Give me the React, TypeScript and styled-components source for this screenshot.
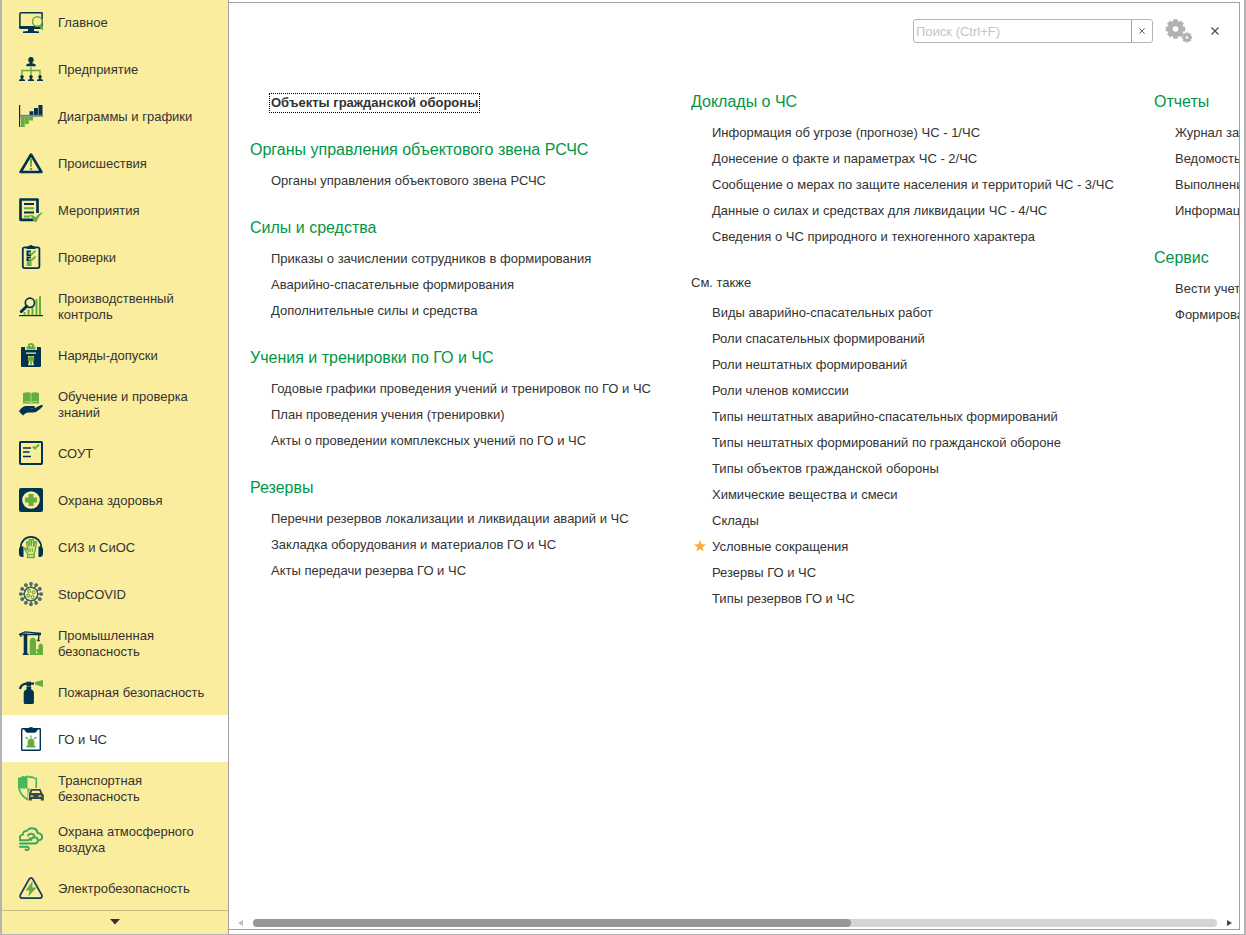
import React, { useRef, useState } from "react";
import styled, { createGlobalStyle, css } from "styled-components";

const NAVY = "#00334f";
const LEAF = "#65ad3f";
const EMERALD = "#37a85a";
const PAPER = "#fbed9e";

const GlobalStyle = createGlobalStyle`
  *, *::before, *::after { box-sizing: border-box; }
  html, body, #root { height: 100%; margin: 0; }
  body {
    background: #fff;
    color: #333;
    font: 13px/16px "Liberation Sans", Arial, sans-serif;
  }
  button { font: inherit; color: inherit; }
`;

const Window = styled.div`
  display: flex;
  height: 100vh;
  overflow: hidden;
  border: solid #b4b4b4;
  border-width: 0 2px 1px 2px;
`;

const Sidebar = styled.nav`
  display: flex;
  flex-direction: column;
  flex: none;
  width: 227px;
  background: ${PAPER};
  border-right: 1px solid #a0a0a0;
`;

const SectionList = styled.ul`
  flex: 1;
  min-height: 0;
  margin: -2px 0 0;
  padding: 0;
  list-style: none;
  overflow: hidden;
`;

const SectionButton = styled.button<{ $active?: boolean }>`
  display: flex;
  align-items: center;
  gap: 14px;
  width: 100%;
  min-height: 47px;
  padding: 9px 16px 8px;
  border: 0;
  text-align: left;
  background: ${(p) => (p.$active ? "#fff" : "transparent")};
  cursor: pointer;
`;

const SectionIcon = styled.svg`
  flex: none;
  width: 26px;
  height: 26px;
`;

const SectionLabel = styled.span`
  max-width: 150px;
  padding-top: 2px;
`;

const MoreButton = styled.button`
  display: flex;
  align-items: center;
  justify-content: center;
  flex: none;
  height: 24px;
  padding: 0 0 2px;
  border: 0;
  border-top: 1px solid #c9bd7e;
  background: none;
  cursor: pointer;
`;

const Panel = styled.main`
  display: flex;
  flex-direction: column;
  flex: 1;
  min-width: 0;
  margin: 2px 4px 4px 0;
  border: solid #a0a0a0;
  border-width: 1px 1px 1px 0;
`;

const Toolbar = styled.header`
  display: flex;
  align-items: center;
  justify-content: flex-end;
  flex: none;
  padding: 16px 20px 0 0;
`;

const SearchBox = styled.div`
  display: flex;
  width: 240px;
  height: 24px;
  border: 1px solid #b4b4b4;
  border-radius: 3px;
  overflow: hidden;
`;

const SearchInput = styled.input`
  flex: 1;
  min-width: 0;
  padding: 2px 2px 0;
  border: 0;
  outline: 0;
  background: none;
  font: inherit;
  color: #333;
  &::placeholder { color: #c4c4c4; opacity: 1; }
`;

const IconButton = styled.button<{ $divided?: boolean }>`
  display: flex;
  align-items: center;
  justify-content: center;
  padding: 0;
  border: 0;
  background: none;
  cursor: pointer;
  ${(p) =>
    p.$divided &&
    css`
      width: 21px;
      border-left: 1px solid #a0a0a0;
    `}
`;

const ToolbarActions = styled.div`
  display: flex;
  align-items: center;
  gap: 18px;
  margin-left: 12px;
`;

const Viewport = styled.div`
  flex: 1;
  min-height: 0;
  padding: 47px 0 0 21px;
  overflow: hidden;
`;

const Columns = styled.div`
  display: flex;
  gap: 42px;
  width: max-content;
`;

const Column = styled.div<{ $width: number }>`
  display: flex;
  flex-direction: column;
  gap: 22px;
  width: ${(p) => p.$width}px;
`;

const Heading = styled.h2<{ $plain?: boolean }>`
  margin: 0 0 6px;
  font-weight: 400;
  font-size: ${(p) => (p.$plain ? 13 : 16)}px;
  line-height: ${(p) => (p.$plain ? 22 : 24)}px;
  color: ${(p) => (p.$plain ? "#333" : "#009646")};
`;

const CommandList = styled.ul`
  margin: 0;
  padding: 0 0 0 21px;
  list-style: none;
`;

const CommandRow = styled.li`
  position: relative;
  line-height: 26px;
  white-space: nowrap;
`;

const Command = styled.a<{ $focused?: boolean }>`
  color: #333;
  text-decoration: none;
  ${(p) =>
    p.$focused &&
    css`
      display: inline-block;
      margin: 3px 0 3px -2px;
      padding: 1px;
      border: 1px dotted #000;
      font-weight: 700;
      line-height: 16px;
    `}
`;

const Star = styled.svg`
  position: absolute;
  left: -18px;
  top: 6px;
`;

const ScrollBar = styled.div`
  display: flex;
  align-items: center;
  flex: none;
  gap: 9px;
  height: 12px;
  padding: 0 7px 0 9px;
`;

const Track = styled.div`
  flex: 1;
  height: 8px;
  border-radius: 4px;
  background: #d4d4d4;
`;

const Thumb = styled.div`
  width: 62%;
  height: 8px;
  border-radius: 4px;
  background: #979797;
`;

const person = (x: number, y: number, s: number) => (
  <g transform={`translate(${x} ${y}) scale(${s})`} fill={NAVY}>
    <ellipse cx="0" cy="2.8" rx="2.7" ry="2.9" />
    <path d="M-1.300 4h2.600v2.200l2.700.8q.8.5.8 2.300h-9.600q0-1.800.8-2.300l2.700-.8z" />
  </g>
);

const icons: Record<string, React.ReactNode> = {
  monitor: (
    <>
      <path d="M23 3V3.8Q23 2.7 21.500 2.700H2.200Q.9 2.700.9 4v13.500h22.200V3z" fill="none" stroke={NAVY} strokeWidth="1.500" />
      <path d="M.3 16h19.500l2.200 3H1.500Q.3 19 .3 17.500zM9 19h6v2l5 .6V23H4v-1.400L9 21z" fill={NAVY} />
      <circle cx="18.300" cy="11.500" r="4.800" fill={PAPER} stroke={LEAF} strokeWidth="1.500" />
      <path d="M20 16l4 5V15.500z" fill={LEAF} />
    </>
  ),
  company: (
    <>
      {person(12, 0, 1)}
      <path d="M12 10v8.500M3 18v-4.500h18V18" fill="none" stroke={LEAF} strokeWidth="1.400" />
      {person(3, 18, 0.65)}
      {person(12, 18, 0.65)}
      {person(21, 18, 0.65)}
    </>
  ),
  bars: (
    <>
      <path d="M0 1h1.200v22H0z" fill={NAVY} />
      <path d="M2 13h3.800v10H2zM6 13h3.800v7H6zM10 13h4v3.500h-4z" fill={LEAF} />
      <path d="M10.500 7.300h3.900V11h-3.900zM15 4h3.900v7H15zM19.400 1H23.500v10h-4.100z" fill={NAVY} />
      <path d="M1 10.800h23v2H1z" fill="#738780" />
    </>
  ),
  warning: (
    <>
      <path d="M12 3.500L22.400 21H1.600z" fill="none" stroke={NAVY} strokeWidth="2.600" strokeLinejoin="round" />
      <path d="M10.900 7.500h2.200l-.3 8.500h-1.600zM10.900 17h2.200v2h-2.200z" fill={LEAF} />
    </>
  ),
  events: (
    <>
      <path d="M18.500 15V1.500H1.500v20.300h13" fill="none" stroke={NAVY} strokeWidth="2.700" strokeLinejoin="round" />
      <path d="M5 5h10v2H5zM5 13.500h10v2H5z" fill={NAVY} />
      <path d="M5 9.300h10v2H5zM5 17.500h6v2H5z" fill={LEAF} />
      <path d="M11 17l3 .3 2.700 2.300Q19.500 15 23.800 14q-3.600 4-6.500 10h-1.600z" fill={LEAF} />
    </>
  ),
  checks: (
    <>
      <rect x="3.800" y="2.300" width="16.600" height="20.800" rx="1.800" fill="none" stroke={NAVY} strokeWidth="1.800" />
      <path d="M7.500 3Q8 1 10 1q2-2 4 0 2 0 2.500 2v1h-9z" fill={NAVY} />
      <path d="M7.500 5.500h4.500v1.700H9.700v2H12V11H7.500zM7.500 11.500h4.500v1.700H9.700v2H12v1H7.500z" fill={NAVY} />
      <path d="M7.800 16.500h4.700V21H7.800z" fill={LEAF} />
      <path d="M10.500 7.500l2 2 4-3.800M10.500 13.300l2 2 4-3.800" fill="none" stroke={LEAF} strokeWidth="1.800" />
    </>
  ),
  control: (
    <>
      <path d="M20 2.200h2V21h-2zM16.500 5h2v16h-2zM12.500 13.500h2V21h-2zM8.500 15.500h2V21h-2zM4.500 18h2v3h-2z" fill={LEAF} />
      <path d="M0 21h24v1.200H0z" fill={NAVY} />
      <circle cx="10.900" cy="8.800" r="4.600" fill={PAPER} stroke={NAVY} strokeWidth="1.700" />
      <path d="M7.700 12.200l-5.400 5.300" fill="none" stroke={NAVY} strokeWidth="3" strokeLinecap="round" />
    </>
  ),
  permits: (
    <>
      <path d="M2 5q0-1 1.200-1H6v3h12V4h3q1 0 1 1v18q0 1-1 1H3q-1 0-1-1z" fill={NAVY} />
      <path d="M8.500 4Q8.800 0 12 0t3.500 4H16.500V6.500H7.500V4z" fill={LEAF} />
      <path d="M11 2h2v1.300h-2z" fill={PAPER} />
      <path d="M7 9.500h10v1.300H7zM9 13h6V17l-1 1.500 1 3.700H9l1-3.700-1-1.500z" fill={PAPER} />
      <path d="M8.800 14.500Q12 12 15.200 14.500V17l-3.200 2-3.200-2zM11 19h2v2.500h-2z" fill={LEAF} />
    </>
  ),
  training: (
    <>
      <path d="M4 1q5-1.500 8 0 3-1.500 8 0v10.500H4z" fill={LEAF} />
      <path d="M12 1v9.500M5.500 9.800q4-.8 6.500.7 2.500-1.500 6.500-.7" fill="none" stroke={PAPER} strokeWidth=".6" />
      <path d="M0 19.500Q2 15 6.500 14H15q2 .7 0 2.200h-4q3 1 5.500-.4l5-2.600q2.300-.5 2.500.7-3 3.800-7 6-3 1-8 .6-3 .5-5 2.900z" fill={NAVY} />
    </>
  ),
  assessment: (
    <>
      <rect x="1" y="1" width="22" height="22" rx=".8" fill="none" stroke={NAVY} strokeWidth="2" />
      <path d="M4 7h8M4 11h6.500M4 13h0M4 15.500h8" fill="none" stroke={NAVY} strokeWidth="1.700" />
      <path d="M14 5.500l2 2 4-4" fill="none" stroke={LEAF} strokeWidth="2" />
    </>
  ),
  health: (
    <>
      <rect width="24" height="24" rx="2" fill={NAVY} />
      <circle cx="12" cy="12" r="8.800" fill={PAPER} />
      <path d="M9.500 6h5v3.500H18v5h-3.500V18h-5v-3.500H6v-5h3.500z" fill={LEAF} />
    </>
  ),
  protection: (
    <>
      <path d="M1.800 14V12a10.200 10.200 0 0 1 20.400 0v2" fill="none" stroke={NAVY} strokeWidth="1.700" />
      <path d="M0 14q0-2 2-2.500h2.500V22H2.500Q0 21.500 0 19zM24 14q0-2-2-2.500h-2.500V22h2q2.500-.5 2.500-3z" fill={NAVY} />
      <path d="M8.500 22.500V18.500L5.500 14q-.3-1.600 1.500-.8l2 2L7.500 7.500Q8.300 6 9.300 7.500l1 4L10 5q1-1.400 1.800 0l.5 6 .5-6.500q1-1.300 1.800.3v7l1.400-5q1.300-.9 1.500.7l-1.300 8-1 3v4z" fill="#dfe28a" stroke={LEAF} strokeWidth="1.300" />
      <path d="M8.500 19.500h6.700M11 13v4M13.300 13v4" stroke={LEAF} strokeWidth="1" />
    </>
  ),
  virus: (
    <>
      <circle cx="12" cy="12" r="6.800" fill={PAPER} stroke="#3f6068" strokeWidth="1.600" />
      {Array.from({ length: 12 }, (_, i) => (
        <g key={i} transform={`rotate(${i * 30} 12 12)`}>
          <path d="M12 3v3" stroke="#3f6068" strokeWidth="1.200" />
          <circle cx="12" cy="1.800" r="1.200" fill="#8da083" stroke="#3f6068" strokeWidth="1.300" />
        </g>
      ))}
      <g fill="none" stroke={LEAF} strokeWidth="1.100">
        <circle cx="10" cy="9" r="1.400" />
        <circle cx="14.500" cy="10.200" r="1.400" />
        <circle cx="9.300" cy="13.500" r="1.400" />
        <circle cx="13.500" cy="15" r="1.500" />
      </g>
    </>
  ),
  industry: (
    <>
      <path d="M4.700 2.500h3.600V22.500H9.500V24H3.700v-1.500h1z" fill={NAVY} />
      <path d="M0 3.500L6 .8l16 1.700M0 3.500h22M2 3.500v2.500M19.800 3v4l-1 2.500h2" fill="none" stroke={NAVY} strokeWidth="1.300" />
      <path d="M10.700 24V9.500q.5-2.300 3.300-3 2.500.5 3 3V18h2.500v-3.500q.3-1.500 2.200-2 2 .5 2.300 2V24z" fill={LEAF} />
      <path d="M17.500 18.500v3.500h1.500" fill="none" stroke={PAPER} strokeWidth=".7" />
    </>
  ),
  fire: (
    <>
      <path d="M4.700 12.500Q5 10.200 7.500 9.500V6.500h4.700v3q2.500.7 2.700 3v10q0 1.500-1.500 1.500H6.200q-1.500 0-1.500-1.500z" fill={NAVY} />
      <path d="M1 9Q2 4.300 7 3.700h8" fill="none" stroke={NAVY} strokeWidth="2.300" />
      <path d="M7.500 1.700h4.500v4.500H7.500z" fill={NAVY} />
      <path d="M16 2l8-2v7l-8-2.500z" fill={LEAF} />
    </>
  ),
  defense: (
    <>
      <rect x="2.700" y="1.700" width="18.600" height="21.600" rx=".6" fill="#fff" stroke={NAVY} strokeWidth="1.400" />
      <path d="M5 1.500h4Q10 0 12 0t3 1.500h4q-.5 3-3 4.300H8q-2.500-1.300-3-4.300z" fill={NAVY} />
      <path d="M7.500 20.500V18.500h1.200V14q.6-2.300 3.300-2.700 2.700.4 3.300 2.700v4.500h1.200v2z" fill={LEAF} />
      <path d="M12 8.500v2.300M6.500 10l2.500 2M17.500 10l-2.500 2" stroke={LEAF} strokeWidth="1.400" />
    </>
  ),
  transport: (
    <>
      <path d="M-.3 2.500Q2.500 2.500 4 .8 6 2 8.500.3 11 2 13 .8q2.200 1.700 4.300 1.700v7Q17.500 18 8.500 23.500-.3 18-.3 9.500z" fill={PAPER} stroke="#46b75c" strokeWidth="1.700" />
      <path d="M8.500.3V12.500H-.3V2.500Q2.500 2.500 4 .8 6 2 8.500.3zM8.500 12.500h8.500Q15 19.500 8.500 23.500z" fill="#46b75c" />
      <path d="M9 18l2.500-6h11l2.500 6v7H9z" fill={PAPER} />
      <path d="M10 17.500l2-4.500h9.500l2 4.500 1.300 1.200v5.800h-3V23h-9v1.500h-3v-5.800z" fill="#354a45" />
      <path d="M12.300 17l1-2.300h7l1 2.300zM11.500 19.500h2.800v1.300h-2.800zM19.500 19.500h2.800v1.300h-2.800z" fill={PAPER} />
    </>
  ),
  air: (
    <g fill="none" stroke={EMERALD} strokeWidth="1.900" strokeLinecap="round">
      <path d="M1.300 12.500Q-.3 8.500 4 7.300q-.3-3.300 3.500-3.300Q10.500.3 15 1.500q3.500 1.200 3.500 4.500 4.300.3 4.700 4-.2 3-3.200 3.200" />
      <path d="M1 16.500h14.500q3.700-.3 3.500-3.300-.5-3-3.500-3-3 .2-3.300 2.800M1 13.300h8q2-.5 1.700-2M9 8.500q1.500-2.500 4.500-1.500 2 .8 2 2.500" />
      <path d="M1 19.700h7q2.500.4 1.500 2.600-1.200 1.600-3 .2" />
    </g>
  ),
  electric: (
    <>
      <path d="M10.200 3q1.800-2.400 3.600 0l9 16q.8 3-2 3.200H3.200q-2.800-.2-2-3.200z" fill="none" stroke="#123f55" strokeWidth="1.700" />
      <path d="M13.500 5L6.500 14.500h4L9.300 20.500 17.700 11.500h-4.400z" fill={LEAF} />
    </>
  ),
};

const sections: { icon: string; label: string; active?: boolean }[] = [
  { icon: "monitor", label: "Главное" },
  { icon: "company", label: "Предприятие" },
  { icon: "bars", label: "Диаграммы и графики" },
  { icon: "warning", label: "Происшествия" },
  { icon: "events", label: "Мероприятия" },
  { icon: "checks", label: "Проверки" },
  { icon: "control", label: "Производственный контроль" },
  { icon: "permits", label: "Наряды-допуски" },
  { icon: "training", label: "Обучение и проверка знаний" },
  { icon: "assessment", label: "СОУТ" },
  { icon: "health", label: "Охрана здоровья" },
  { icon: "protection", label: "СИЗ и СиОС" },
  { icon: "virus", label: "StopCOVID" },
  { icon: "industry", label: "Промышленная безопасность" },
  { icon: "fire", label: "Пожарная безопасность" },
  { icon: "defense", label: "ГО и ЧС", active: true },
  { icon: "transport", label: "Транспортная безопасность" },
  { icon: "air", label: "Охрана атмосферного воздуха" },
  { icon: "electric", label: "Электробезопасность" },
];

type Group = { title?: string; plain?: boolean; focused?: boolean; items: string[] };

const starred = new Set(["Условные сокращения"]);

const columns: { width: number; groups: Group[] }[] = [
  {
    width: 399,
    groups: [
      { focused: true, items: ["Объекты гражданской обороны"] },
      {
        title: "Органы управления объектового звена РСЧС",
        items: ["Органы управления объектового звена РСЧС"],
      },
      {
        title: "Силы и средства",
        items: [
          "Приказы о зачислении сотрудников в формирования",
          "Аварийно-спасательные формирования",
          "Дополнительные силы и средства",
        ],
      },
      {
        title: "Учения и тренировки по ГО и ЧС",
        items: [
          "Годовые графики проведения учений и тренировок по ГО и ЧС",
          "План проведения учения (тренировки)",
          "Акты о проведении комплексных учений по ГО и ЧС",
        ],
      },
      {
        title: "Резервы",
        items: [
          "Перечни резервов локализации и ликвидации аварий и ЧС",
          "Закладка оборудования и материалов ГО и ЧС",
          "Акты передачи резерва ГО и ЧС",
        ],
      },
    ],
  },
  {
    width: 421,
    groups: [
      {
        title: "Доклады о ЧС",
        items: [
          "Информация об угрозе (прогнозе) ЧС - 1/ЧС",
          "Донесение о факте и параметрах ЧС - 2/ЧС",
          "Сообщение о мерах по защите населения и территорий ЧС - 3/ЧС",
          "Данные о силах и средствах для ликвидации ЧС - 4/ЧС",
          "Сведения о ЧС природного и техногенного характера",
        ],
      },
      {
        title: "См. также",
        plain: true,
        items: [
          "Виды аварийно-спасательных работ",
          "Роли спасательных формирований",
          "Роли нештатных формирований",
          "Роли членов комиссии",
          "Типы нештатных аварийно-спасательных формирований",
          "Типы нештатных формирований по гражданской обороне",
          "Типы объектов гражданской обороны",
          "Химические вещества и смеси",
          "Склады",
          "Условные сокращения",
          "Резервы ГО и ЧС",
          "Типы резервов ГО и ЧС",
        ],
      },
    ],
  },
  {
    width: 200,
    groups: [
      { title: "Отчеты", items: ["Журнал занятий", "Ведомость", "Выполнение", "Информация"] },
      { title: "Сервис", items: ["Вести учет", "Формирование"] },
    ],
  },
];

function Gear({ x, y, r, hole }: { x: number; y: number; r: number; hole: number }) {
  return (
    <g transform={`translate(${x} ${y})`}>
      {Array.from({ length: 8 }, (_, i) => (
        <rect key={i} x={-r * 0.24} y={-r} width={r * 0.48} height={r} fill="#b2b2b2" transform={`rotate(${i * 45})`} />
      ))}
      <circle r={r * 0.84} fill="#b2b2b2" />
      <circle r={hole} fill="#fff" />
    </g>
  );
}

function Cross({ size }: { size: number }) {
  return (
    <svg width={size} height={size} viewBox="0 0 8 8" aria-hidden="true">
      <path d="M.5.5l7 7M7.500.5l-7 7" stroke="#444" strokeWidth="1.100" fill="none" />
    </svg>
  );
}

export default function App() {
  const [query, setQuery] = useState("");
  const viewport = useRef<HTMLDivElement>(null);
  const scroll = (dx: number) => viewport.current?.scrollBy({ left: dx });

  return (
    <>
      <GlobalStyle />
      <Window>
        <Sidebar aria-label="Разделы">
          <SectionList>
            {sections.map((s) => (
              <li key={s.label}>
                <SectionButton type="button" $active={s.active} aria-current={s.active ? "page" : undefined}>
                  <SectionIcon viewBox="-1 -1 26 26" aria-hidden="true">
                    {icons[s.icon]}
                  </SectionIcon>
                  <SectionLabel>{s.label}</SectionLabel>
                </SectionButton>
              </li>
            ))}
          </SectionList>
          <MoreButton type="button" aria-label="Еще разделы">
            <svg width="10" height="6" aria-hidden="true">
              <path d="M0 0h10L5 5.500z" fill="#333" />
            </svg>
          </MoreButton>
        </Sidebar>

        <Panel>
          <Toolbar>
            <SearchBox>
              <SearchInput
                type="text"
                aria-label="Поиск"
                placeholder="Поиск (Ctrl+F)"
                value={query}
                onChange={(e) => setQuery(e.target.value)}
              />
              <IconButton type="button" $divided aria-label="Очистить" onClick={() => setQuery("")}>
                <Cross size={6} />
              </IconButton>
            </SearchBox>
            <ToolbarActions>
              <IconButton type="button" aria-label="Настройки">
                <svg width="28" height="24" viewBox="0 0 28 24" aria-hidden="true">
                  <Gear x={10.5} y={10} r={9.7} hole={2.8} />
                  <Gear x={22} y={18.500} r={5} hole={1.3} />
                </svg>
              </IconButton>
              <IconButton type="button" aria-label="Закрыть">
                <Cross size={8} />
              </IconButton>
            </ToolbarActions>
          </Toolbar>

          <Viewport ref={viewport}>
            <Columns>
              {columns.map((column, i) => (
                <Column key={i} $width={column.width}>
                  {column.groups.map((group, j) => (
                    <section key={j}>
                      {group.title && <Heading $plain={group.plain}>{group.title}</Heading>}
                      <CommandList>
                        {group.items.map((item) => (
                          <CommandRow key={item}>
                            {starred.has(item) && (
                              <Star width="12" height="12" viewBox="0 0 12 12" aria-hidden="true">
                                <path d="M6 0l1.600 4.200 4.400.2-3.500 2.800L9.700 11.500 6 9 2.300 11.500l1.200-4.300L0 4.400l4.400-.2z" fill="#fbab3c" />
                              </Star>
                            )}
                            <Command href="#" $focused={group.focused}>
                              {item}
                            </Command>
                          </CommandRow>
                        ))}
                      </CommandList>
                    </section>
                  ))}
                </Column>
              ))}
            </Columns>
          </Viewport>

          <ScrollBar>
            <IconButton type="button" aria-label="Прокрутить влево" onClick={() => scroll(-80)}>
              <svg width="6" height="6" aria-hidden="true">
                <path d="M5 0v6L0 3z" fill="#bdbdbd" />
              </svg>
            </IconButton>
            <Track>
              <Thumb />
            </Track>
            <IconButton type="button" aria-label="Прокрутить вправо" onClick={() => scroll(80)}>
              <svg width="6" height="6" aria-hidden="true">
                <path d="M1 0v6l5-3z" fill="#444" />
              </svg>
            </IconButton>
          </ScrollBar>
        </Panel>
      </Window>
    </>
  );
}
